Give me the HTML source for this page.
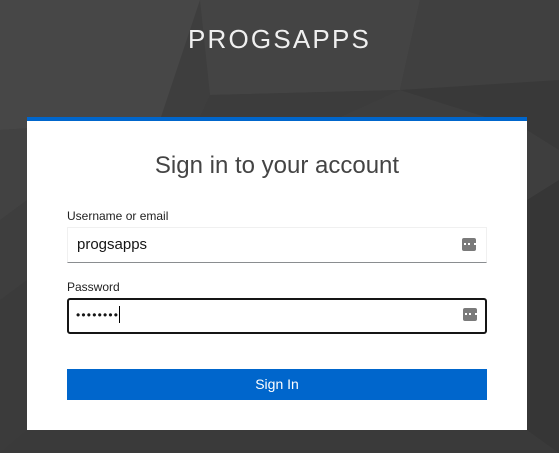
<!DOCTYPE html>
<html><head><style>
*{margin:0;padding:0;box-sizing:border-box}
body{width:559px;height:453px;overflow:hidden;font-family:"Liberation Sans",sans-serif;position:relative;background:#404040}
svg.bg{position:absolute;left:0;top:0}
.brand{position:absolute;left:0;width:559px;top:24px;text-align:center;color:#f0f0f0;font-size:26px;letter-spacing:2.2px}
.card{position:absolute;left:27px;top:117px;width:500px;height:313px;background:#fff;border-top:4px solid #0066cc}
h1{position:absolute;top:31px;left:0;width:500px;text-align:center;font-weight:normal;font-size:24px;color:#444}
.lbl{position:absolute;left:40px;font-size:12px;color:#222}
.inp{position:absolute;left:40px;width:420px;height:36px;background:#fff;border:1px solid #f0f0f0;border-bottom:1px solid #8a8d90;font-size:15px;color:#151515;padding:8px 9px}
.inp.f{border:2px solid #151515;border-radius:3px;padding:6px 7px}
.ic{position:absolute;right:10px;top:10px;width:14px;height:13px;background:#7a7a7a;border-radius:2px}
.ic:after{content:"";position:absolute;left:2px;top:5px;width:8px;height:2px;border-left:2px dotted #fff;border-right:2px dotted #fff;background:linear-gradient(90deg,transparent 2px,#fff 2px,#fff 4px,transparent 4px)}
.btn{position:absolute;left:40px;top:248px;width:420px;height:31px;background:#0066cc;color:#fff;text-align:center;font-size:14px;line-height:31px}
</style></head><body>
<svg class="bg" width="559" height="453">
<rect width="559" height="453" fill="#3e3e3e"/>
<polygon points="0,0 200,0 160,120 0,130" fill="#474747"/>
<polygon points="200,0 420,0 400,90 210,95" fill="#444"/>
<polygon points="420,0 559,0 559,90 400,90" fill="#404040"/>
<polygon points="0,130 160,120 27,200 0,220" fill="#424242"/>
<polygon points="210,95 400,90 340,117 200,117" fill="#3c3c3c"/>
<polygon points="400,90 559,80 559,150 527,130" fill="#393939"/>
<polygon points="527,200 559,180 559,453 527,453" fill="#363636"/>
<polygon points="0,300 27,280 27,453 0,453" fill="#3b3b3b"/>
<polygon points="27,430 527,430 559,453 0,453" fill="#3a3a3a"/>
</svg>
<div class="brand">PROGSAPPS</div>
<div class="card">
<h1>Sign in to your account</h1>
<div class="lbl" style="top:88px">Username or email</div>
<div class="inp" style="top:106px">progsapps<span class="ic"></span></div>
<div class="lbl" style="top:159px">Password</div>
<div class="inp f" style="top:177px"><span style="letter-spacing:1.2px;font-size:12px">••••••••</span><span style="border-left:1px solid #000;margin-left:0"> </span><span class="ic" style="right:8px;top:8px"></span></div>
<div class="btn">Sign In</div>
</div>
</body></html>
